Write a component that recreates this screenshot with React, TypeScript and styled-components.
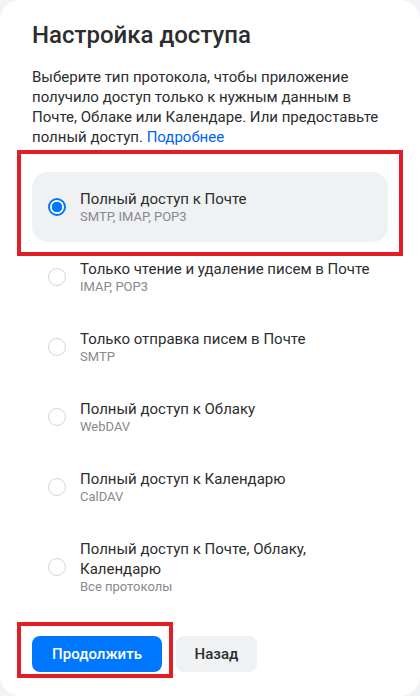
import React, { useState } from 'react';
import styled, { createGlobalStyle } from 'styled-components';

const GlobalStyle = createGlobalStyle`
  html, body {
    margin: 0;
    padding: 0;
    background: #f2f3f5;
  }
  body {
    font-family: Roboto, 'Noto Sans', Arial, sans-serif;
    color: #2c2d2e;
  }
`;

type Option = { title: string; sub: string };

const options: Option[] = [
  { title: 'Полный доступ к Почте', sub: 'SMTP, IMAP, POP3' },
  { title: 'Только чтение и удаление писем в Почте', sub: 'IMAP, POP3' },
  { title: 'Только отправка писем в Почте', sub: 'SMTP' },
  { title: 'Полный доступ к Облаку', sub: 'WebDAV' },
  { title: 'Полный доступ к Календарю', sub: 'CalDAV' },
  { title: 'Полный доступ к Почте, Облаку, Календарю', sub: 'Все протоколы' },
];

const App = () => {
  const [selected, setSelected] = useState(0);

  return (
    <>
      <GlobalStyle />
      <Card>
        <Title>Настройка доступа</Title>
        <Description>
          Выберите тип протокола, чтобы приложение получило доступ только к нужным данным в Почте,
          Облаке или Календаре. Или предоставьте полный доступ. <Link href="#">Подробнее</Link>
        </Description>

        <List>
          {options.map((o, i) => (
            <Item key={o.title} $active={i === selected} onClick={() => setSelected(i)}>
              <Radio $checked={i === selected} />
              <Texts>
                <ItemTitle>{o.title}</ItemTitle>
                <ItemSub>{o.sub}</ItemSub>
              </Texts>
              {i === 0 && <Highlight $top={22} $right={15} $bottom={14} $left={15} />}
            </Item>
          ))}
        </List>

        <Footer>
          <PrimaryButton>
            Продолжить
            <Highlight $top={14} $right={11} $bottom={6} $left={15} />
          </PrimaryButton>
          <SecondaryButton>Назад</SecondaryButton>
        </Footer>
      </Card>
    </>
  );
};
export default App;

const Card = styled.div`
  box-sizing: border-box;
  width: 420px;
  height: 696px;
  background: #fff;
  border-radius: 20px;
  padding: 20px 32px 0 32px;
  display: flex;
  flex-direction: column;
`;

const Title = styled.h1`
  margin: 0;
  font-size: 24px;
  line-height: 30px;
  font-weight: 500;
  color: #2c2d2e;
`;

const Description = styled.p`
  margin: 17px 0 0 0;
  font-size: 15px;
  line-height: 20px;
  color: #2c2d2e;
`;

const Link = styled.a`
  color: #005ff9;
  text-decoration: none;
`;

const List = styled.div`
  margin-top: 25px;
  display: flex;
  flex-direction: column;
`;

const Item = styled.div<{ $active: boolean }>`
  position: relative;
  display: flex;
  align-items: center;
  gap: 14px;
  padding: 17px 16px;
  border-radius: 16px;
  background: ${({ $active }) => ($active ? '#f0f1f3' : 'transparent')};
  cursor: pointer;
`;

const Radio = styled.span<{ $checked: boolean }>`
  flex: none;
  box-sizing: border-box;
  width: 18px;
  height: 18px;
  border-radius: 50%;
  border: ${({ $checked }) => ($checked ? '2px solid #0077ff' : '1.5px solid #d3d5d9')};
  background: ${({ $checked }) => ($checked ? 'radial-gradient(circle, #0077ff 0 5px, #fff 5.5px)' : '#fff')};
`;

const Texts = styled.div`
  display: flex;
  flex-direction: column;
  min-width: 0;
`;

const ItemTitle = styled.div`
  font-size: 15px;
  line-height: 20px;
  color: #2c2d2e;
`;

const ItemSub = styled.div`
  font-size: 13px;
  line-height: 16px;
  color: #87898f;
`;

const Highlight = styled.span<{ $top: number; $right: number; $bottom: number; $left: number }>`
  position: absolute;
  top: ${({ $top }) => -$top}px;
  right: ${({ $right }) => -$right}px;
  bottom: ${({ $bottom }) => -$bottom}px;
  left: ${({ $left }) => -$left}px;
  border: 4px solid #e11d25;
  pointer-events: none;
`;

const Footer = styled.div`
  margin-top: auto;
  margin-bottom: 24px;
  display: flex;
  gap: 14px;
`;

const Button = styled.button`
  position: relative;
  height: 36px;
  border: none;
  border-radius: 8px;
  font-family: inherit;
  font-size: 15px;
  font-weight: 500;
  cursor: pointer;
`;

const PrimaryButton = styled(Button)`
  width: 130px;
  background: #0077ff;
  color: #fff;
`;

const SecondaryButton = styled(Button)`
  width: 81px;
  background: #f0f1f3;
  color: #2c2d2e;
`;
